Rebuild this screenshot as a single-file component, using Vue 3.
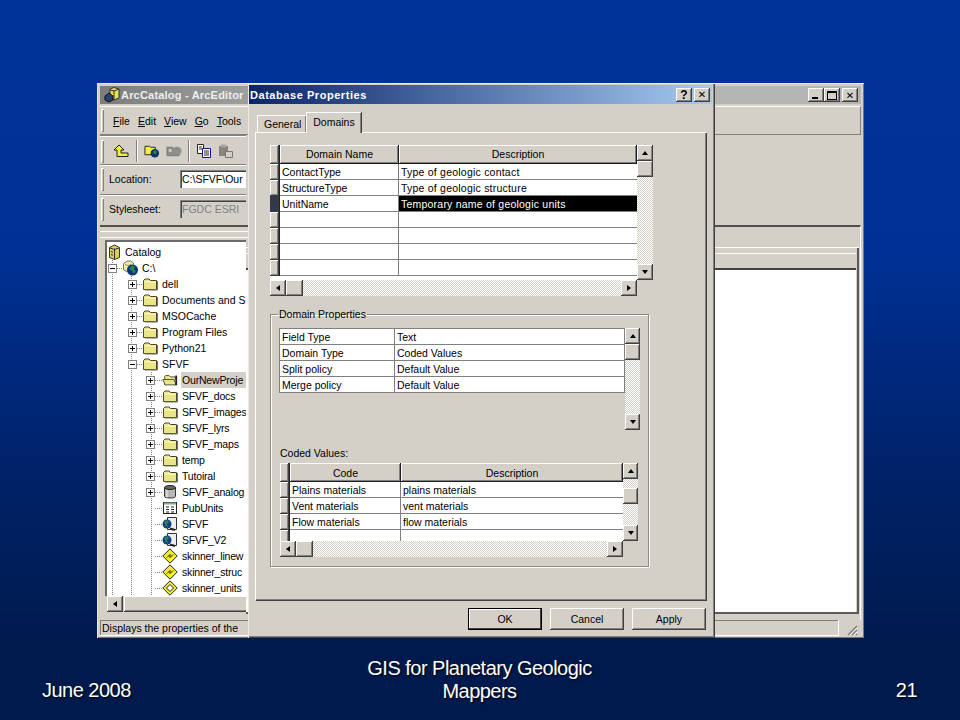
<template>
  <div class="slide">
    <svg class="defs" width="0" height="0">
      <symbol id="folder" viewBox="0 0 16 16">
        <path d="M1.500 13.500V4.500L3 3h4l1.500 1.500h6v9z" fill="#e9e68a" stroke="#45452e"/>
        <path d="M2.500 6h11.500" stroke="#fffcc4"/>
        <path d="M15.500 5v9H3" stroke="#77775a" fill="none"/>
      </symbol>
      <symbol id="folderopen" viewBox="0 0 18 16">
        <path d="M3 13.500V4l1-1h4l1.500 1.500H15v3" fill="#e9e68a" stroke="#45452e"/>
        <path d="M1 7.500h12.500L16 13.500H3.500z" fill="#e9e68a" stroke="#45452e"/>
        <path d="M16 3v11" stroke="#222" stroke-width="2"/>
      </symbol>
      <symbol id="db" viewBox="0 0 16 16">
        <path d="M2.500 3.500v9c0 2 11 2 11 0v-9" fill="#b8b8b8" stroke="#333"/>
        <ellipse cx="8" cy="3.500" rx="5.500" ry="2" fill="#666" stroke="#222"/>
        <path d="M5 6v7.500" stroke="#eee"/>
      </symbol>
      <symbol id="table" viewBox="0 0 16 16">
        <rect x="1.500" y="2.500" width="13" height="11" fill="#fff" stroke="#222"/>
        <path d="M2 3.500h12" stroke="#7fb07f" stroke-width="2"/>
        <path d="M4 7h3M9 7h3M4 9.500h3M9 9.500h3M4 12h3M9 12h3" stroke="#222"/>
      </symbol>
      <symbol id="globe" viewBox="0 0 16 16">
        <path d="M5.500 1.500h9v12h-9z" fill="#eee" stroke="#333"/>
        <circle cx="5" cy="8" r="4.500" fill="#123c8c"/>
        <path d="M2 6l3-2 2 2-2 2 1 3-2-1z" fill="#2c8a3c"/>
        <path d="M8 12.500l5 1.500" stroke="#222" stroke-width="2"/>
      </symbol>
      <symbol id="diamond" viewBox="0 0 16 16">
        <path d="M8 .8L15.200 8 8 15.200.8 8z" fill="#f2ec2a" stroke="#222"/>
        <path d="M5 9.500L8 6.500v3l3-3" fill="none" stroke="#222"/>
      </symbol>
      <symbol id="diamondw" viewBox="0 0 16 16">
        <path d="M8 .8L15.200 8 8 15.200.8 8z" fill="#f2ec2a" stroke="#222"/>
        <path d="M8 4.500L11.500 8 8 11.500 4.500 8z" fill="#fff" stroke="#222"/>
      </symbol>
      <symbol id="catalog" viewBox="0 0 16 16">
        <path d="M2.500 3.500l5-2.500 5 2.500v10l-5 2-5-2z" fill="#d8cf5a" stroke="#333"/>
        <path d="M7.500 4.500v11M3 4l4.500 1.500L12 4M4 7.500l2 .7M4 10.500l2 .7" stroke="#333" fill="none"/>
      </symbol>
      <symbol id="appicon" viewBox="0 0 16 16">
        <path d="M6 2l4-1.500L15 2v9l-5 2-4-2z" fill="#e8dd60" stroke="#333"/>
        <path d="M10 3v10M6 3l4 1 5-2" stroke="#333" fill="none"/>
        <path d="M1 9l4-3 4 3v4l-4 2-4-2z" fill="#2a3f74" stroke="#111"/>
      </symbol>
      <symbol id="drive" viewBox="0 0 16 16">
        <path d="M1.500 3.500L5.500 1h3l3 2v7L6 12l-4.500-2z" fill="#eee7a8" stroke="#777"/>
        <path d="M3 4.500l3 1 3-1" stroke="#999" fill="none"/>
        <circle cx="10.500" cy="10" r="5.500" fill="#0f2f86"/>
        <path d="M7 9l3-3.500 3 1-1 3 2 2-3 2.500-1-3z" fill="#1f8a3a"/>
      </symbol>
    </svg>

    <main class="stage">
      <section class="arc">
        <header class="titlebar arc-title">
          <svg class="app-icon" width="16" height="16"><use href="#appicon" /></svg>
          <span class="title-text">ArcCatalog - ArcEditor</span>
          <div class="caption-btns">
            <button class="cap raised"><i class="ic-min"></i></button>
            <button class="cap raised"><i class="ic-max"></i></button>
            <button class="cap raised close">✕</button>
          </div>
        </header>

        <div class="band menu-band">
          <span class="grip"></span>
          <span v-for="m in menus" :key="m" class="menu-item"><u>{{ m[0] }}</u>{{ m.slice(1) }}</span>
        </div>

        <div class="left-bands">
          <div class="band-row tools">
            <span class="grip"></span>
            <svg class="tool first" width="16" height="14" viewBox="0 0 16 14">
              <path d="M6 1L1 6h3v6.500h11v-3.500H8V6h3z" fill="#f4ee3c" stroke="#222"/>
            </svg>
            <span class="tool-sep"></span>
            <svg class="tool" width="16" height="16" viewBox="0 0 17 16">
              <path d="M1 12V3h5l1 1h5v8z" fill="#f4ee3c" stroke="#222"/>
              <circle cx="11.500" cy="10.500" r="4.500" fill="#0f2f66"/>
              <path d="M9 9l3-2 2 2-2 3z" fill="#1f8a3a"/>
            </svg>
            <svg class="tool" width="16" height="16" viewBox="0 0 17 16">
              <path d="M1 13V4h6l1 1h6v8z" fill="#8c8c88" stroke="#777"/>
              <circle cx="12" cy="8" r="4.500" fill="#8f8f8b"/>
              <path d="M3 6h3v3H3z" fill="#d4d0c8"/>
            </svg>
            <span class="tool-sep"></span>
            <svg class="tool" width="16" height="16" viewBox="0 0 16 16">
              <path d="M1.500 1.500h6v9h-6z" fill="#fff" stroke="#222"/>
              <path d="M6.500 5.500h8v9h-8z" fill="#fff" stroke="#14148c"/>
              <path d="M8 8h5M8 10h5M8 12h5M3 4h3M3 6h3" stroke="#222"/>
            </svg>
            <svg class="tool" width="16" height="16" viewBox="0 0 16 16">
              <path d="M1 3h9v10H1z" fill="#888480"/>
              <path d="M3 1.500h5v3H3z" fill="#a8a49e"/>
              <path d="M7.500 8.500h7v6h-7z" fill="#d4d0c8" stroke="#777"/>
            </svg>
          </div>
          <div class="band-row loc">
            <span class="grip"></span>
            <label class="loc-label">Location:</label>
            <div class="field">C:\SFVF\Our</div>
          </div>
          <div class="band-row loc">
            <span class="grip"></span>
            <label class="loc-label dim">Stylesheet:</label>
            <div class="field off">FGDC ESRI</div>
          </div>
        </div>

        <div class="panes">
          <div class="left-pane">
            <div class="drag-lines"></div>
            <div class="tree">
              <div class="tree-rows">
                <div v-for="n in tree" :key="n.key" class="node" :class="'lv' + n.lv">
                  <span v-if="n.exp" class="exp" :class="{ open: n.exp === '-' }"></span>
                  <span v-else-if="n.lv > 0" class="exp-none"></span>
                  <span v-if="n.lv > 0" class="dots"></span>
                  <svg class="node-ic" width="16" height="16"><use :href="'#' + n.ic" /></svg>
                  <span class="node-label" :class="{ sel: n.sel }">{{ n.t }}</span>
                </div>
              </div>
              <div class="tree-scroll">
                <button class="sb-btn raised"><i class="arr l"></i></button>
                <div class="tree-thumb raised"></div>
              </div>
            </div>
          </div>
          <div class="right-pane">
            <div class="rp-inner">
              <div class="rp-head"></div>
              <div class="rp-white"></div>
            </div>
          </div>
        </div>

        <footer class="status">
          <div class="status-main">Displays the properties of the</div>
          <svg class="resize" width="12" height="12" viewBox="0 0 12 12">
            <path d="M11 2L2 11M11 6L6 11M11 10L10 11" stroke="#808080" stroke-width="1.500"/>
            <path d="M11 4L4 11M11 8L8 11" stroke="#fff"/>
          </svg>
        </footer>
      </section>

      <section class="dialog">
        <header class="titlebar dlg-title">
          <span class="title-text">Database Properties</span>
          <div class="caption-btns dlg-caps">
            <button class="cap raised wide help">?</button>
            <button class="cap raised wide close">✕</button>
          </div>
        </header>

        <nav class="tabs">
          <div class="tab">General</div>
          <div class="tab active">Domains</div>
        </nav>

        <div class="tab-panel">
          <div class="dgrid g1">
            <div class="dtable">
              <div class="drow head">
                <span class="rh raised-soft"></span>
                <span class="hc raised-hd c1">Domain Name</span>
                <span class="hc raised-hd c2">Description</span>
              </div>
              <div v-for="(r, i) in domains" :key="i" class="drow">
                <span class="rh raised-soft" :class="{ cur: r.sel }"></span>
                <span class="td c1">{{ r.a }}</span>
                <span class="td c2 wide-text" :class="{ black: r.sel }">{{ r.b }}</span>
              </div>
            </div>
            <div class="vscroll">
              <button class="sb-btn raised"><i class="arr u"></i></button>
              <div class="sb-thumb raised"></div>
              <div class="hatch"></div>
              <button class="sb-btn raised"><i class="arr d"></i></button>
            </div>
            <div class="hscroll">
              <button class="sb-btn raised"><i class="arr l"></i></button>
              <div class="sb-thumb raised"></div>
              <div class="hatch"></div>
              <button class="sb-btn raised"><i class="arr r"></i></button>
            </div>
          </div>

          <fieldset class="group">
            <legend>Domain Properties</legend>
            <div class="dgrid g2">
              <div class="dtable props">
                <div v-for="p in props" :key="p[0]" class="drow">
                  <span class="td c1">{{ p[0] }}</span>
                  <span class="td c2">{{ p[1] }}</span>
                </div>
              </div>
              <div class="vscroll">
                <button class="sb-btn raised"><i class="arr u"></i></button>
                <div class="sb-thumb raised"></div>
                <div class="hatch"></div>
                <button class="sb-btn raised"><i class="arr d"></i></button>
              </div>
            </div>

            <div class="coded-label">Coded Values:</div>

            <div class="dgrid g3">
              <div class="dtable">
                <div class="drow head">
                  <span class="rh raised-soft"></span>
                  <span class="hc raised-hd c1">Code</span>
                  <span class="hc raised-hd c2">Description</span>
                </div>
                <div v-for="(r, i) in coded" :key="i" class="drow">
                  <span class="rh raised-soft"></span>
                  <span class="td c1">{{ r[0] }}</span>
                  <span class="td c2">{{ r[1] }}</span>
                </div>
              </div>
              <div class="vscroll">
                <button class="sb-btn raised"><i class="arr u"></i></button>
                <div class="hatch short"></div>
                <div class="sb-thumb raised"></div>
                <div class="hatch"></div>
                <button class="sb-btn raised"><i class="arr d"></i></button>
              </div>
              <div class="hscroll">
                <button class="sb-btn raised"><i class="arr l"></i></button>
                <div class="sb-thumb raised"></div>
                <div class="hatch"></div>
                <button class="sb-btn raised"><i class="arr r"></i></button>
              </div>
            </div>
          </fieldset>
        </div>

        <div class="dlg-actions">
          <button class="push default">OK</button>
          <button class="push raised">Cancel</button>
          <button class="push raised">Apply</button>
        </div>
      </section>
    </main>

    <footer class="slide-foot">
      <div class="f-left">June 2008</div>
      <div class="f-mid">GIS for Planetary Geologic<br />Mappers</div>
      <div class="f-right">21</div>
    </footer>
  </div>
</template>

<script setup>
const menus = ['File', 'Edit', 'View', 'Go', 'Tools']

const raw = [
  [0, '', 'catalog', 'Catalog'],
  [1, '-', 'drive', 'C:\\'],
  [2, '+', 'folder', 'dell'],
  [2, '+', 'folder', 'Documents and S'],
  [2, '+', 'folder', 'MSOCache'],
  [2, '+', 'folder', 'Program Files'],
  [2, '+', 'folder', 'Python21'],
  [2, '-', 'folder', 'SFVF'],
  [3, '+', 'folderopen', 'OurNewProje', true],
  [3, '+', 'folder', 'SFVF_docs'],
  [3, '+', 'folder', 'SFVF_images'],
  [3, '+', 'folder', 'SFVF_lyrs'],
  [3, '+', 'folder', 'SFVF_maps'],
  [3, '+', 'folder', 'temp'],
  [3, '+', 'folder', 'Tutoiral'],
  [3, '+', 'db', 'SFVF_analog'],
  [3, '', 'table', 'PubUnits'],
  [3, '', 'globe', 'SFVF'],
  [3, '', 'globe', 'SFVF_V2'],
  [3, '', 'diamond', 'skinner_linew'],
  [3, '', 'diamond', 'skinner_struc'],
  [3, '', 'diamondw', 'skinner_units']
]
const tree = raw.map((r, i) => ({ key: i, lv: r[0], exp: r[1], ic: r[2], t: r[3], sel: r[4] }))

const domains = [
  { a: 'ContactType', b: 'Type of geologic contact' },
  { a: 'StructureType', b: 'Type of geologic structure' },
  { a: 'UnitName', b: 'Temporary name of geologic units', sel: true },
  { a: '', b: '' },
  { a: '', b: '' },
  { a: '', b: '' },
  { a: '', b: '' }
]

const props = [
  ['Field Type', 'Text'],
  ['Domain Type', 'Coded Values'],
  ['Split policy', 'Default Value'],
  ['Merge policy', 'Default Value']
]

const coded = [
  ['Plains materials', 'plains materials'],
  ['Vent materials', 'vent materials'],
  ['Flow materials', 'flow materials'],
  ['', '']
]
</script>

<style>
html, body { margin: 0; padding: 0; }
</style>

<style scoped>
* { box-sizing: border-box; }
.defs { display: block; height: 0; }
.slide {
  width: 960px;
  height: 720px;
  overflow: hidden;
  background: linear-gradient(180deg, #003399 0, #003094 260px, #00236c 450px, #001a4d 650px, #001a4d 720px);
  font-family: "Liberation Sans", Arial, sans-serif;
}
.stage { position: relative; height: 640px; }

/* shared win2k chrome */
.raised { box-shadow: inset -1px -1px #404040, inset 1px 1px #fff, inset -2px -2px #808080, inset 2px 2px #d4d0c8; background: #d4d0c8; }
.raised-soft { box-shadow: inset -1px -1px #404040, inset 1px 1px #fff, inset -2px -2px #808080; background: #d4d0c8; }
.raised-hd { box-shadow: inset -1px -1px #1c1c1c, inset 1px 1px #fff, inset -2px -2px #808080; background: #d4d0c8; }

.arc, .dialog {
  position: absolute;
  top: 83px;
  height: 555px;
  background: #d4d0c8;
  color: #000;
  font-size: 10.500px;
  display: flex;
  flex-direction: column;
  box-shadow: inset 1px 1px #e8e6e0, inset -1px -1px #777;
}
.arc { left: 97px; width: 767px; padding: 3px 3px 2px; }
.dialog { left: 248px; width: 467px; padding: 2px 3px 0 1px; box-shadow: inset 1px 1px #ecebe6, inset -1px -1px #404040, inset -2px -2px #808080; }

.titlebar { height: 18px; flex: none; display: flex; align-items: center; color: #fff; font-weight: 700; font-size: 11px; letter-spacing: .55px; white-space: nowrap; }
.arc-title { background: linear-gradient(90deg, #7c7c7c 0, #a8a8a8 25%, #b5b5b5 60%); color: #eeeeee; padding-left: 4px; letter-spacing: .2px; }
.app-icon { margin-right: 1px; flex: none; }
.dlg-title { height: 19px; background: linear-gradient(90deg, #0a246a 0, #a6caf0 100%); padding-left: 1px; }
.caption-btns { margin-left: auto; display: flex; padding-right: 3px; }
.dlg-caps { gap: 2px; padding-right: 2px; }
.cap { width: 16px; height: 14px; border: 0; padding: 0; display: flex; align-items: center; justify-content: center; font: 700 10px "DejaVu Sans", sans-serif; color: #000; }
.cap.wide { width: 16px; }
.cap.help { font-size: 12px; font-family: "Liberation Sans", sans-serif; }
.close { margin-left: 2px; }
.dlg-caps .close { margin-left: 0; }
.ic-min { display: block; width: 6px; height: 2px; background: #000; margin-top: 6px; margin-right: 2px; }
.ic-max { display: block; width: 10px; height: 9px; border: 1px solid #000; border-top-width: 2px; }

/* left arc bands */
.band { flex: none; }
.menu-band {
  height: 29px;
  margin-top: 2px;
  display: flex;
  align-items: center;
  border-right: 1px solid #808080;
  border-bottom: 1px solid #808080;
  border-top: 1px solid #fff;
  padding-left: 1px;
  font-size: 10.500px;
}
.grip { flex: none; width: 3px; height: 23px; background: #d4d0c8; box-shadow: inset 1px 1px #fff, inset -1px -1px #808080; margin-right: 9px; }
.menu-item { margin-right: 8px; }
.left-bands { flex: none; height: 90px; width: 146px; padding-top: 1px; }
.band-row { height: 30px; display: flex; align-items: center; padding-left: 1px; border-top: 1px solid #fff; box-shadow: 0 -1px #808080; white-space: nowrap; }
.band-row.tools { height: 29px; }
.band-row.loc { padding-bottom: 3px; }
.tool { flex: none; margin-right: 6px; }
.tool.first { margin-right: 7px; margin-left: 0; }
.tool-sep { flex: none; width: 2px; height: 22px; background: #fff; border-left: 1px solid #808080; margin-right: 6px; }
.loc-label { width: 71px; flex: none; margin-left: -4px; }
.field { flex: 1; height: 18px; background: #fff; line-height: 18px; padding-left: 2px; overflow: hidden; box-shadow: inset 1px 1px #808080, inset 2px 2px #404040; }
.field.off { background: #d4d0c8; color: #808080; }

.panes { flex: 1; display: flex; min-height: 0; border-top: 2px solid #505050; border-right: 1px solid #fff; }
.left-pane { width: 146px; flex: none; padding: 0 0 0 5px; display: flex; flex-direction: column; }
.drag-lines { height: 13px; margin-left: -5px; margin-right: -3px; flex: none; border-top: 0; background: linear-gradient(#d4d0c8 0 4px, #fff 4px 5px, #d4d0c8 5px 10px, #fff 10px 11px, #d4d0c8 11px); }
.tree {
  flex: 1;
  min-height: 0;
  display: flex;
  flex-direction: column;
  background: #fff;
  padding-left: 0;
  box-shadow: inset 2px 2px #6a6a6a;
  overflow: hidden;
  margin-bottom: 8px;
}
.tree-rows {
  flex: 1;
  min-height: 0;
  padding: 4px 0 0 2px;
  background-image:
    linear-gradient(#808080 50%, transparent 50%),
    linear-gradient(#808080 50%, transparent 50%),
    linear-gradient(#808080 50%, transparent 50%);
  background-size: 1px 2px;
  background-repeat: repeat-y;
  background-position: 7px 0, 26px 0, 46px 0;
  background-clip: content-box;
  background-origin: border-box;
}
.node { height: 16px; display: flex; align-items: center; white-space: nowrap; overflow: hidden; line-height: 16px; }
.node.lv0 { padding-left: 0; background: #fff; }
.node.lv1 { padding-left: 1px; }
.node.lv2 { padding-left: 21px; }
.node.lv3 { padding-left: 39px; letter-spacing: -.18px; }
.exp { flex: none; width: 9px; height: 9px; border: 1px solid #808080; background: linear-gradient(#000,#000) center / 5px 1px no-repeat, linear-gradient(#000,#000) center / 1px 5px no-repeat, #fff; }
.exp.open { background: linear-gradient(#000,#000) center / 5px 1px no-repeat, #fff; }
.exp-none { flex: none; width: 9px; }
.dots { flex: none; width: 5px; height: 1px; border-top: 1px dotted #808080; }
.lv3 .dots { width: 7px; }
.node-ic { flex: none; background: #fff; }
.lv0 .node-ic { margin-right: 1px; }
.node-label { padding: 0 1px; margin-left: 3px; background: #fff; }
.lv0 .node-label { margin-left: 0; }
.node-label.sel { background: #d4d0c8; flex: 1; }

.tree-scroll { height: 16px; flex: none; display: flex; padding-left: 2px; background: #d4d0c8; }
.tree-thumb { flex: 1; margin: 0 -4px 0 1px; }

.right-pane { flex: 1; padding: 20px 1px 6px 0; }
.rp-inner { height: 100%; display: flex; flex-direction: column; box-shadow: inset -2px 0 #5a5a5a, inset 0 -2px #5a5a5a; border-top: 1px solid #fff; padding-top: 5px; padding-right: 3px; padding-bottom: 2px; }
.rp-head { height: 17px; flex: none; border-top: 1px solid #fff; border-bottom: 2px solid #404040; }
.rp-white { flex: 1; background: #fff; }

.status { flex: none; height: 16px; display: flex; align-items: center; }
.status-main { flex: 1; height: 16px; line-height: 17px; padding-left: 2px; box-shadow: inset -1px -1px #fff, inset 1px 1px #808080; margin-right: 7px; }
.resize { flex: none; margin-right: 3px; margin-top: 4px; }

/* dialog */
.tabs { height: 28px; flex: none; display: flex; align-items: flex-end; padding-left: 8px; }
.tab { height: 17px; line-height: 17px; padding: 0 6px; margin-bottom: 0; border-top: 1px solid #fff; border-left: 1px solid #fff; box-shadow: inset -1px 0 #808080; width: 49px; text-align: center; }
.tab.active { height: 21px; width: 55px; line-height: 18px; box-shadow: 1px 0 #404040, inset -1px 0 #808080; position: relative; z-index: 1; margin-bottom: -1px; background: #d4d0c8; }
.tab-panel {
  margin: 0 6px 0 6px;
  height: 468px;
  flex: none;
  padding: 12px 0 0 14px;
  border-top: 1px solid #fff;
  border-left: 1px solid #fff;
  box-shadow: inset -1px -1px #808080, 1px 1px #404040;
}
.dgrid { display: grid; }
.g1 { grid-template-columns: 367px 16px; grid-template-rows: 135px 16px; width: 383px; height: 151px; }
.g2 { grid-template-columns: 346px 15px; height: 102px; width: 361px; }
.g3 { grid-template-columns: 343px 15px; grid-template-rows: 78px 16px; width: 358px; height: 94px; margin-left: 1px; }
.dtable { overflow: hidden; background: #fff; }
.drow { display: flex; height: 16px; flex: none; }
.drow.head { height: 19px; }
.rh { flex: none; width: 10px; border-right: 1px solid #222; }
.rh.cur { background: #333a45; box-shadow: none; }
.hc { flex: none; text-align: center; line-height: 18px; }
.g3 .hc { line-height: 20px; }
.td { flex: none; line-height: 16px; padding-left: 2px; overflow: hidden; white-space: nowrap; border-bottom: 1px solid #808080; border-right: 1px solid #808080; background: #fff; }
.g3 .td { line-height: 17px; }
.td.c2 { border-right: 0; flex: 1; }
.wide-text { letter-spacing: .22px; }
.black { background: #000; color: #fff; }
.g1 .c1 { width: 119px; }
.g1 .c2 { width: 238px; }
.g2 .c1 { width: 115px; padding-left: 2px; }
.g2 .c2 { width: 231px; }
.props { height: 65px; background: transparent; border-top: 1px solid #808080; border-left: 1px solid #808080; border-right: 1px solid #808080; }
.g3 .rh { width: 10px; }
.g3 .c1 { width: 111px; }
.g3 .c2 { width: 222px; }

.vscroll { display: flex; flex-direction: column; }
.g2 .vscroll { height: 102px; }
.hscroll { display: flex; grid-column: 1; }
.hscroll .sb-thumb { width: 17px; }
.vscroll .sb-thumb { height: 16px; }
.hatch { flex: 1; background: repeating-conic-gradient(#fff 0 25%, #d4d0c8 0 50%) 0 0 / 2px 2px; }
.hatch.short { flex: none; height: 9px; }
.sb-btn { flex: none; width: 16px; height: 16px; border: 0; padding: 0; display: flex; align-items: center; justify-content: center; }
.g2 .vscroll .sb-btn, .g3 .vscroll .sb-btn { width: 15px; }
.arr { display: block; width: 0; height: 0; border: 3.500px solid transparent; }
.arr.u { border-bottom: 4px solid #000; border-top-width: 0; }
.arr.d { border-top: 4px solid #000; border-bottom-width: 0; }
.arr.l { border-right: 4px solid #000; border-left-width: 0; }
.arr.r { border-left: 4px solid #000; border-right-width: 0; }

.group {
  margin: 12px 0 0;
  padding: 7px 0 0 8px;
  width: 379px;
  height: 259px;
  border: 1px solid #8c8a84;
  box-shadow: 1px 1px #fff, inset 1px 1px #fff;
  min-width: 0;
}
.group legend { padding: 0 1px; margin-left: -1px; line-height: 13px; font-size: 10.500px; }
.coded-label { height: 14px; line-height: 16px; margin: 15px 0 4px 1px; }

.dlg-actions { flex: none; display: flex; justify-content: flex-end; gap: 8px; padding: 8px 6px 0 0; }
.push { width: 74px; height: 22px; border: 0; padding: 0; font: 10.500px "Liberation Sans", Arial, sans-serif; color: #000; }
.push.default { background: #d4d0c8; border: 1px solid #000; box-shadow: inset -1px -1px #404040, inset 1px 1px #fff; }

/* footer */
.slide-foot {
  height: 80px;
  display: grid;
  grid-template-columns: 1fr 240px 1fr;
  color: #fff;
  font-size: 20px;
  letter-spacing: -.52px;
  text-shadow: 1px 1px 2px #000;
  padding: 17px 43px 0 42px;
  line-height: 23px;
}
.f-left, .f-right { padding-top: 22px; }
.f-mid { text-align: center; }
.f-right { text-align: right; }
</style>
